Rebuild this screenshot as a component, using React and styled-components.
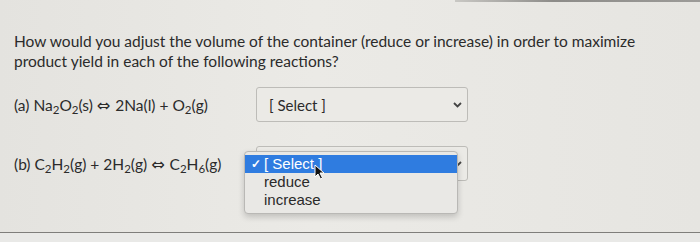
import styled, { createGlobalStyle } from 'styled-components';

const Global = createGlobalStyle`
  html, body {
    margin: 0;
    padding: 0;
    background: #e8e7e3;
  }
  body {
    font-family: Lato, "Open Sans", sans-serif;
    color: #2b2b2b;
  }
`;

const Page = styled.div`
  width: 700px;
  height: 242px;
  overflow: hidden;
  background: linear-gradient(90deg, #e4e3df 0%, #ebeae6 45%, #e6e5e1 100%);
  display: flex;
  flex-direction: column;
`;

const TopEdge = styled.div`
  height: 2px;
  margin-left: 455px;
  background: linear-gradient(90deg, #c9c8c4, #8d8c89 40%, #9c9b98);
`;

const Content = styled.div`
  padding: 29px 14px 0 14px;
  flex: 1;
`;

const Question = styled.p`
  margin: 0;
  font-size: 15.5px;
  line-height: 20px;
  width: 660px;
`;

const Rows = styled.div`
  margin-top: 16px;
  display: grid;
  grid-template-columns: 242px 212px;
  grid-auto-rows: 35px;
  row-gap: 24px;
  align-items: center;
`;

const Equation = styled.div`
  font-size: 15.5px;
  white-space: nowrap;

  sub {
    font-size: 11.5px;
    vertical-align: -3px;
    line-height: 0;
  }
`;

const Arrow = styled.span`
  margin: 0 5px 0 4px;
  font-family: "DejaVu Sans", sans-serif;
  font-size: 16px;
  line-height: 0;
`;

const SelectBox = styled.div`
  position: relative;
  height: 35px;
  box-sizing: border-box;
  border: 1px solid #bdbcb8;
  border-radius: 3px;
  background: #ebeae6;
  display: flex;
  align-items: center;
  justify-content: space-between;
  padding: 0 5px 0 12px;
  font-size: 15px;
`;

const Chevron = styled.svg`
  width: 9px;
  height: 6px;
`;

const Menu = styled.ul`
  position: absolute;
  left: -13px;
  top: 4px;
  width: 212px;
  margin: 0;
  padding: 3px 0 4px;
  list-style: none;
  background: #e9e8e5;
  border: 1px solid #b9b8b5;
  border-radius: 4px;
  box-shadow: 0 3px 6px rgba(0, 0, 0, 0.18);
  font-family: "Liberation Sans", Arial, sans-serif;
  font-size: 15px;
  z-index: 2;
`;

const Option = styled.li`
  height: 18px;
  line-height: 18px;
  padding-left: 19px;
  position: relative;
  color: ${({ active }) => (active ? '#ffffff' : '#2a2a2a')};
  background: ${({ active }) => (active ? '#2f7ce0' : 'transparent')};
`;

const Check = styled.span`
  position: absolute;
  left: 6px;
  font-size: 12px;
  font-weight: bold;
`;

const Cursor = styled.svg`
  position: absolute;
  left: 69px;
  top: 9px;
  width: 11px;
  height: 16px;
`;

const BottomRule = styled.div`
  height: 1px;
  background: #7f7e7b;
`;

const Footer = styled.div`
  height: 9px;
  background: #e9e9e7;
`;

const ChevronIcon = () => (
  <Chevron viewBox="0 0 9 6">
    <path d="M1 1 L4.5 4.5 L8 1" fill="none" stroke="#444" strokeWidth="1.8" />
  </Chevron>
);

const App = () => (
  <Page>
    <Global />
    <TopEdge />
    <Content>
      <Question>
        How would you adjust the volume of the container (reduce or increase) in order to maximize
        product yield in each of the following reactions?
      </Question>
      <Rows>
        <Equation>
          (a) Na<sub>2</sub>O<sub>2</sub>(s)<Arrow>⇔</Arrow>2Na(l) + O<sub>2</sub>(g)
        </Equation>
        <SelectBox>
          <span>[ Select ]</span>
          <ChevronIcon />
        </SelectBox>
        <Equation>
          (b) C<sub>2</sub>H<sub>2</sub>(g) + 2H<sub>2</sub>(g)<Arrow>⇔</Arrow>C<sub>2</sub>H<sub>6</sub>(g)
        </Equation>
        <SelectBox>
          <span>[ Select ]</span>
          <ChevronIcon />
          <Menu>
            <Option active>
              <Check>✓</Check>[ Select ]
              <Cursor viewBox="0 0 11 16">
                <path d="M1 1 L1 13 L4 10 L6.5 15 L8.5 14 L6 9 L10 9 Z" fill="#111" stroke="#fff" strokeWidth="1" />
              </Cursor>
            </Option>
            <Option>reduce</Option>
            <Option>increase</Option>
          </Menu>
        </SelectBox>
      </Rows>
    </Content>
    <BottomRule />
    <Footer />
  </Page>
);

export default App;
